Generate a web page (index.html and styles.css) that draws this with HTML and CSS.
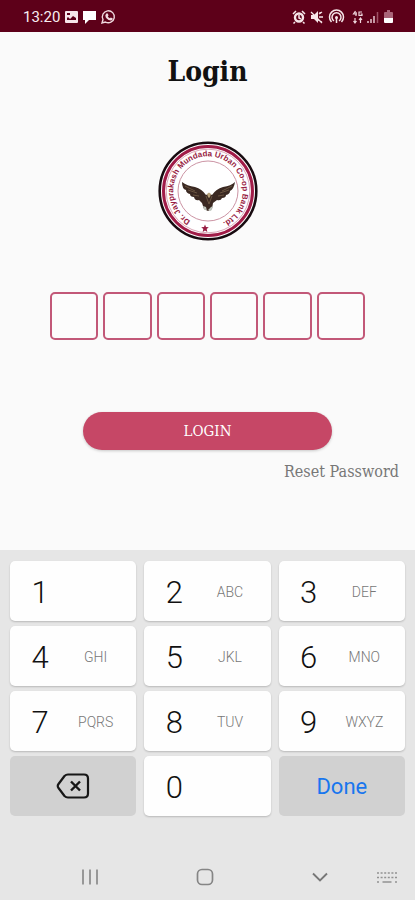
FILE: index.html
```html
<!DOCTYPE html>
<html lang="en">
<head>
<meta charset="utf-8">
<meta name="viewport" content="width=device-width, initial-scale=1">
<title>Login</title>
<link rel="stylesheet" href="styles.css">
</head>
<body>
<header class="status">
  <span class="time">13:20</span>
  <svg class="left-icons" width="52" height="16" viewBox="0 0 52 16" aria-hidden="true">
    <path fill="#f7e6ea" fill-rule="evenodd" d="M2 2h11q1 0 1 1v10q0 1-1 1H2q-1 0-1-1V3q0-1 1-1zM3 11h9V9L9 7 6 10 4 8 3 9zM3 4v2h3V4z"/>
    <path fill="#fff" d="M19 2h13v9h-7l-4 4v-4h-2z"/>
    <path fill="none" stroke="#f0d8df" stroke-width="1.4" d="M38 14l1-3.500a6 6 0 1 1 2.400 2.500z"/>
    <path fill="#f0d8df" d="M42 5q1-1.500 2 0l.5 1.500-.7 1q1 1.500 2.200 1.700l.8-.7 2 1q0 2-2 2-5-.8-5.500-5z"/>
  </svg>
  <svg class="right-icons" width="104" height="16" viewBox="0 0 104 16" aria-hidden="true">
    <g fill="none" stroke="#f7e6ea">
      <circle cx="8" cy="8.500" r="4" stroke-width="2.400"/>
      <path stroke-width="1.500" d="M2 5l3-3M14 5l-3-3M4 13l-1.500 1.500M12 13l1.500 1.500M8 6v3l2 1"/>
      <path stroke-width="1.300" d="M20 3l11 11M28 5l3-2M28 8h4M27 11l4 2M29 3v2"/>
      <path stroke-width="1.500" d="M40.500 13a7 7 0 1 1 10 0M43 12a4.500 4.500 0 1 1 5 0M45.500 9v5"/>
    </g>
    <path fill="#f7e6ea" d="M20 6h3l4-4v12l-4-4h-3z"/>
    <circle cx="45.500" cy="8.500" r="1.500" fill="#f7e6ea"/>
    <path fill="none" stroke="#f0d8df" stroke-width="1.200" d="M64.500 2l-2 3h3.500M65 3v4M71 3h-3v3.500h3V5h-1.500M64 9v5M62.500 12l1.500 2 1.500-2M69.500 14V9M68 11l1.500-2 1.500 2"/>
    <path stroke="#e8c8d1" stroke-width="1.500" d="M77 12v2M80 10v4M83 7v7"/>
    <path stroke="#9d5065" stroke-width="1.500" d="M86.500 3v11"/>
    <path fill="#a96478" d="M94 3h2V1h3v2h2q1 0 1 1v5h-9V4q0-1 1-1z"/>
    <path fill="#fff" d="M93 9h9v4q0 1-1 1h-7q-1 0-1-1z"/>
  </svg>
</header>
<main class="login">
  <h1>Login</h1>
  <svg class="logo" width="100" height="100" viewBox="0 0 100 100" role="img" aria-label="Bank logo">
    <defs><path id="ring" d="M32.400 79.900A34.700 34.700 0 1 1 61.900 82.600"/></defs>
    <circle cx="50" cy="50" r="48.300" fill="#fff" stroke="#180b10" stroke-width="2.600"/>
    <circle cx="50" cy="50" r="44.500" fill="none" stroke="#a11c48" stroke-width="3"/>
    <circle cx="50" cy="50" r="41.800" fill="none" stroke="#c98398" stroke-width=".7"/>
    <circle cx="50" cy="50" r="30" fill="none" stroke="#c58799" stroke-width=".9"/>
    <text class="logo-text"><textPath href="#ring">Dr. Jayprakash Mundada Urban Co-op Bank Ltd.</textPath></text>
    <path fill="#981d43" d="M47 83.500l1 2.600 2.800.2-2.100 1.800.6 2.800-2.300-1.500-2.300 1.500.6-2.800-2.100-1.800 2.800-.2z"/>
    <path fill="#3b2922" d="M24 41q5 4 13 5 7 2 11 8l3-1.500 3 1.500q4-6 11-8 8-1 12-5-1 7-5 9 0 3-4 4 0 3-4 3-1 3-5 2l-4 3-1 6-4 2-4-2-2-6-3-3q-4 1-5-3-4 0-4-3-4-1-4-4-4-1-4-8z"/>
    <path fill="none" stroke="#766047" stroke-width=".8" d="M27 45l10 5M30 49l9 3M35 54l6 1M74 45l-10 5M71 49l-9 3M66 54l-6 1M48 55l3 8 3-8"/>
    <path fill="#b8a27b" d="M49 53l2-1.500 2 1.500-1 3-1 1-1-1z"/>
    <path fill="#bfc5bc" d="M45 65l3 1 1 4-3-2zM53 66l2-1-2 5-3-1z"/>
  </svg>
  <form class="form">
    <div class="pin">
      <input type="password" maxlength="1" inputmode="numeric" aria-label="Digit 1">
      <input type="password" maxlength="1" inputmode="numeric" aria-label="Digit 2">
      <input type="password" maxlength="1" inputmode="numeric" aria-label="Digit 3">
      <input type="password" maxlength="1" inputmode="numeric" aria-label="Digit 4">
      <input type="password" maxlength="1" inputmode="numeric" aria-label="Digit 5">
      <input type="password" maxlength="1" inputmode="numeric" aria-label="Digit 6">
    </div>
    <button class="submit" type="button">LOGIN</button>
    <a class="reset" href="#">Reset Password</a>
  </form>
</main>
<section class="keyboard" aria-label="Keyboard">
  <div class="keys">
    <button class="key"><span>1</span></button>
    <button class="key"><span>2</span><small>ABC</small></button>
    <button class="key"><span>3</span><small>DEF</small></button>
    <button class="key"><span>4</span><small>GHI</small></button>
    <button class="key"><span>5</span><small>JKL</small></button>
    <button class="key"><span>6</span><small>MNO</small></button>
    <button class="key"><span>7</span><small>PQRS</small></button>
    <button class="key"><span>8</span><small>TUV</small></button>
    <button class="key"><span>9</span><small>WXYZ</small></button>
    <button class="key action" aria-label="Delete">
      <svg width="34" height="26" viewBox="0 0 34 26" fill="none" stroke="#171717" stroke-linejoin="round">
        <path stroke-width="2.200" d="M12 1.500h16q4 0 4 4v15q0 4-4 4H12q-2 0-3.500-1.500L2.500 15q-1.500-2 0-4L8.500 3Q10 1.500 12 1.500z"/>
        <path stroke-width="2.400" d="M15 8.500l9 9M24 8.500l-9 9"/>
      </svg>
    </button>
    <button class="key"><span>0</span></button>
    <button class="key action done">Done</button>
  </div>
  <nav class="nav">
    <button aria-label="Recent apps"><svg width="18" height="18" viewBox="0 0 18 18"><path stroke="#858585" stroke-width="1.600" d="M2 1.500v15M9 1.500v15M16 1.500v15"/></svg></button>
    <button aria-label="Home"><svg width="18" height="18" viewBox="0 0 18 18"><rect x="1.500" y="1.500" width="15" height="15" rx="4.500" fill="none" stroke="#858585" stroke-width="1.700"/></svg></button>
    <button aria-label="Hide keyboard"><svg width="18" height="18" viewBox="0 0 18 18"><path fill="none" stroke="#777" stroke-width="1.900" d="M2 5.500l7 7 7-7"/></svg></button>
    <button aria-label="Switch keyboard"><svg width="20" height="18" viewBox="0 0 20 18"><path fill="none" stroke="#929292" stroke-width="1.700" stroke-dasharray="2 1.600" d="M0 5h20M0 9.500h20"/><path stroke="#929292" stroke-width="1.700" d="M0 14h2M5.500 14h9M18 14h2"/></svg></button>
  </nav>
</section>
</body>
</html>
```
FILE: styles.css
```css
* { box-sizing: border-box; }
body {
  margin: 0;
  min-height: 100vh;
  display: flex;
  flex-direction: column;
  background: #fafafa;
  font-family: Roboto, sans-serif;
}
button { border: 0; font: inherit; }
svg { display: block; }
.status {
  display: flex;
  align-items: center;
  height: 32px;
  padding: 2px 20px 0 23px;
  background: #5d0019;
  color: #f9edf0;
}
.time { font-size: 15px; }
.left-icons { margin-left: 4px; }
.right-icons { margin-left: auto; }
.login {
  flex: 1;
  display: flex;
  flex-direction: column;
  align-items: center;
  font-family: "DejaVu Serif Condensed", "DejaVu Serif", serif;
}
h1 {
  margin: 20px 0 49px;
  font-size: 28px;
  line-height: 40px;
  color: #111;
}
.logo-text {
  font: bold 8px "Liberation Sans", sans-serif;
  fill: #981d43;
}
.form {
  width: 100%;
  display: flex;
  flex-direction: column;
  align-items: center;
}
.pin {
  display: grid;
  grid-template-columns: repeat(6, 1fr);
  gap: 5px;
  width: 76%;
  margin: 51px 0 72px;
}
.pin input {
  width: 100%;
  min-width: 0;
  height: 48px;
  padding: 0;
  border: 2px solid #c25878;
  border-radius: 5px;
  background: #fcfcfc;
  text-align: center;
  font-size: 20px;
}
.submit {
  width: 60%;
  height: 38px;
  border-radius: 19px;
  background: #c64766;
  color: #fff;
  font-size: 15px;
  box-shadow: 0 1px 3px #0003;
}
.reset {
  align-self: flex-end;
  margin: 10px 16px 20px;
  font-size: 16px;
  line-height: 24px;
  color: #777;
  text-decoration: none;
}
.keyboard {
  padding: 11px 10px 0;
  background: #e6e6e6;
}
.keys {
  display: grid;
  grid-template-columns: repeat(3, 1fr);
  gap: 5px 8px;
}
.key {
  display: grid;
  grid-template-columns: 60px 1fr;
  align-items: center;
  justify-items: center;
  height: 60px;
  padding: 2px 15px 0 0;
  border-radius: 5px;
  background: #fefefe;
  color: #111;
  box-shadow: 0 1px 2px #0003;
}
.key span {
  font-size: 31px;
  font-weight: 350;
}
.key small {
  font-size: 14px;
  font-weight: 300;
  color: #777;
}
.action {
  grid-template-columns: 1fr;
  padding: 0;
  background: #d1d1d1;
  box-shadow: none;
}
.done {
  color: #1976ee;
  font-size: 22px;
}
.nav {
  display: grid;
  grid-template-columns: 7fr 7fr 7fr 1fr;
  align-items: center;
  height: 84px;
  padding: 38px 8px 0 22px;
}
.nav button {
  display: flex;
  justify-content: center;
  padding: 0;
  background: none;
}
```
